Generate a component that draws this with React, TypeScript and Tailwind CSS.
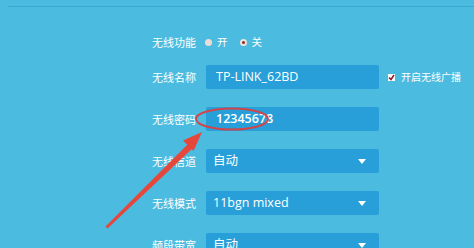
import React from "react";

const font = { fontFamily: '"Noto Sans CJK SC", "Noto Sans", sans-serif' };

function Label({ text }: { text: string }) {
  return (
    <div className="w-[54px] shrink-0 text-[11px] leading-none text-white" style={font}>
      {text}
    </div>
  );
}

function Caret() {
  return (
    <svg width="8" height="5" viewBox="0 0 8 5" className="shrink-0">
      <polygon points="0,0 8,0 4,5" fill="#ffffff" />
    </svg>
  );
}

function SelectRow({ label, value, last }: { label: string; value: string; last?: boolean }) {
  return (
    <div className={"flex items-center " + (last ? "" : "mb-[18px]")}>
      <Label text={label} />
      <div className="flex h-[24px] w-[173px] items-center justify-between rounded-[2px] bg-[#289fd8] pl-[7px] pr-[13px]">
        <span className="text-[12.5px] text-white" style={{ fontFamily: '"Open Sans", "Noto Sans CJK SC", sans-serif' }}>
          {value}
        </span>
        <Caret />
      </div>
    </div>
  );
}

export default function App() {
  return (
    <div className="relative h-[248px] w-[474px] overflow-hidden bg-[#4bbce0]">
      <div className="ml-[8px] mt-[6px] h-[1px] bg-[#3aa9d2]" />
      <div className="pl-[152px] pt-[28px]">
        {/* row 1 */}
        <div className="flex h-[14px] items-center">
          <Label text="无线功能" />
          <div className="flex items-center text-[10.5px] leading-none text-white" style={font}>
            <span className="ml-[-1px] h-[7px] w-[7px] rounded-full bg-[#ecdcd6]" />
            <span className="ml-[5px]">开</span>
            <span className="ml-[12px] flex h-[7px] w-[7px] items-center justify-center rounded-full bg-[#efe3de]">
              <span className="h-[3px] w-[3px] rounded-full bg-[#8a2a2a]" />
            </span>
            <span className="ml-[5px]">关</span>
          </div>
        </div>
        {/* row 2 */}
        <div className="mt-[16px] mb-[18px] flex items-center">
          <Label text="无线名称" />
          <div className="flex h-[24px] w-[173px] items-center rounded-[2px] bg-[#289fd8] pl-[10px]">
            <span className="text-[12.5px] text-white" style={{ fontFamily: '"Open Sans", sans-serif' }}>
              TP-LINK_62BD
            </span>
          </div>
          <div className="ml-[9px] flex items-center">
            <span className="flex h-[7px] w-[7px] items-center justify-center bg-white">
              <svg width="7" height="7" viewBox="0 0 7 7">
                <path d="M1 3.5 L3 5.5 L6 1" stroke="#8a1f2a" strokeWidth="1.6" fill="none" />
              </svg>
            </span>
            <span className="ml-[6px] text-[10px] leading-none text-white" style={font}>
              开启无线广播
            </span>
          </div>
        </div>
        {/* row 3 */}
        <div className="mb-[18px] flex items-center">
          <Label text="无线密码" />
          <div className="flex h-[24px] w-[173px] items-center rounded-[2px] bg-[#289fd8] pl-[10px]">
            <span className="text-[12.5px] font-semibold text-white" style={{ fontFamily: '"Open Sans", sans-serif' }}>
              12345678
            </span>
          </div>
        </div>
        <SelectRow label="无线信道" value="自动" />
        <SelectRow label="无线模式" value="11bgn mixed" />
        <SelectRow label="频段带宽" value="自动" last />
      </div>
      {/* annotations */}
      <svg className="pointer-events-none absolute left-0 top-0" width="474" height="248" viewBox="0 0 474 248">
        <ellipse cx="232" cy="119" rx="36" ry="10.5" fill="none" stroke="#d0454a" strokeWidth="2" />
        <polygon points="105.5,226.5 189.5,142.5 194,147 107.5,228.5" fill="#e5473a" />
        <polygon points="202,132 183,140.5 193.5,151" fill="#e5473a" />
      </svg>
    </div>
  );
}
